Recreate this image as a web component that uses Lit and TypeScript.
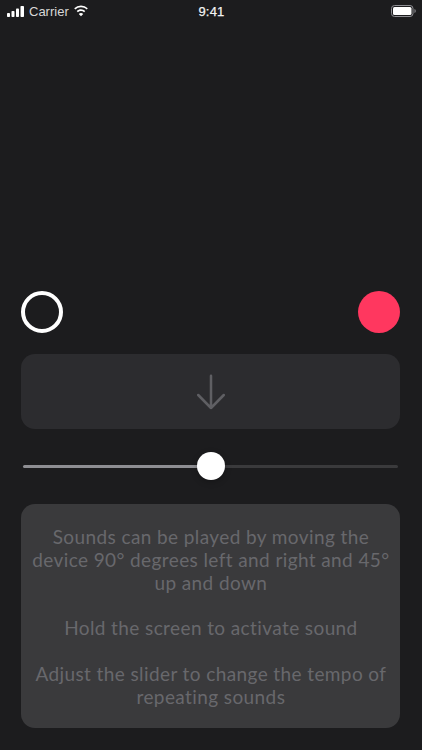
import { LitElement, html, css } from "lit";
import { customElement } from "lit/decorators.js";

@customElement("app-root")
export class AppRoot extends LitElement {
  static styles = css`
    :host { display: block; width: 422px; height: 750px; background: #1c1c1e; overflow: hidden; font-family: "Lato", "Liberation Sans", sans-serif; }
    .page { display: flex; flex-direction: column; height: 750px; box-sizing: border-box; padding: 0 21.6px 22px 21.4px; }
    .status { display: grid; grid-template-columns: 1fr auto 1fr; align-items: center; height: 22px; margin: 0 -21.6px 0 -21.4px; padding: 0 6px 0 7px; color: #fff; font-family: "Liberation Sans", sans-serif; font-size: 13px; }
    .status .left { display: flex; align-items: center; gap: 4px; color: #d8d8d8; }
    .status .time { font-size: 13px; letter-spacing: 0.2px; color: #f2f2f2; -webkit-text-stroke: 0.25px #f2f2f2; }
    .status .right { display: flex; justify-content: flex-end; }
    .spacer { flex: 1; }
    .dots { display: flex; justify-content: space-between; margin-bottom: 21px; }
    .ring { width: 42px; height: 42px; box-sizing: border-box; border: 4px solid #fff; border-radius: 50%; }
    .rec { width: 42px; height: 42px; background: #ff375f; border-radius: 50%; }
    .arrow { height: 75px; background: #2c2c2f; border-radius: 14px; display: flex; align-items: center; justify-content: center; }
    .slider { position: relative; height: 28px; margin: 23px 2px 24px; display: flex; align-items: center; }
    .fill { height: 3px; background: #8e8e93; border-radius: 2px 0 0 2px; }
    .rest { flex: 1; height: 3px; background: #3a3a3c; border-radius: 0 2px 2px 0; }
    .knob { position: absolute; left: 174px; top: -0.5px; width: 28px; height: 28px; border-radius: 50%; background: #fff; box-shadow: 0 2px 6px rgba(0,0,0,0.25); }
    .info { height: 224px; box-sizing: border-box; background: #3a3a3c; border-radius: 14px; padding: 22px 8px; display: flex; flex-direction: column; gap: 22.8px; text-align: center; color: #68686c; font-size: 19px; letter-spacing: 0.4px; line-height: 22.8px; }
    .info p { margin: 0; }
  `;

  render() {
    return html`
      <div class="page">
        <div class="status">
          <div class="left">
            <svg width="18" height="11" viewBox="0 0 18 11" fill="#fff">
              <rect x="0" y="7" width="3" height="4" rx="0.8"/>
              <rect x="4.500" y="5" width="3" height="6" rx="0.8"/>
              <rect x="9" y="2.500" width="3" height="8.500" rx="0.8"/>
              <rect x="13.500" y="0" width="3.500" height="11" rx="0.8"/>
            </svg>
            <span>Carrier</span>
            <svg width="16" height="12" viewBox="0 0 16 12" fill="#fff">
              <path d="M8 2.300c2.200 0 4.200.8 5.700 2.200l1.100-1.200A9.900 9.900 0 0 0 8 .6 9.900 9.900 0 0 0 1.200 3.300l1.100 1.200A8.300 8.300 0 0 1 8 2.300z"/>
              <path d="M8 6c1.200 0 2.300.4 3.100 1.200l1.200-1.200A6.300 6.300 0 0 0 8 4.300c-1.600 0-3.100.6-4.300 1.700l1.200 1.200A4.600 4.600 0 0 1 8 6z"/>
              <path d="M8 11.300l2.200-2.300A3.100 3.100 0 0 0 8 8.100c-.9 0-1.600.3-2.200.9z"/>
            </svg>
          </div>
          <div class="time">9:41</div>
          <div class="right">
            <svg width="25" height="12" viewBox="0 0 25 12">
              <rect x="0.500" y="0.500" width="21.500" height="11" rx="3" fill="none" stroke="#8e8e93"/>
              <rect x="2" y="2" width="18.500" height="8" rx="1.500" fill="#fff"/>
              <path d="M23.500 4v4c.7-.3 1.200-1 1.200-2s-.5-1.700-1.200-2z" fill="#8e8e93"/>
            </svg>
          </div>
        </div>
        <div class="spacer"></div>
        <div class="dots"><div class="ring"></div><div class="rec"></div></div>
        <div class="arrow">
          <svg width="30" height="38" viewBox="0 0 30 38" fill="none" stroke="#5f5f63" stroke-width="2.500" stroke-linecap="round" stroke-linejoin="round">
            <path d="M15 2.800V35M2.200 22L15 35 27.800 22"/>
          </svg>
        </div>
        <div class="slider">
          <div class="fill" style="width: 187px"></div>
          <div class="rest"></div>
          <div class="knob"></div>
        </div>
        <div class="info">
          <p>Sounds can be played by moving the device 90° degrees left and right and 45° up and down</p>
          <p>Hold the screen to activate sound</p>
          <p>Adjust the slider to change the tempo of repeating sounds</p>
        </div>
      </div>
    `;
  }
}
